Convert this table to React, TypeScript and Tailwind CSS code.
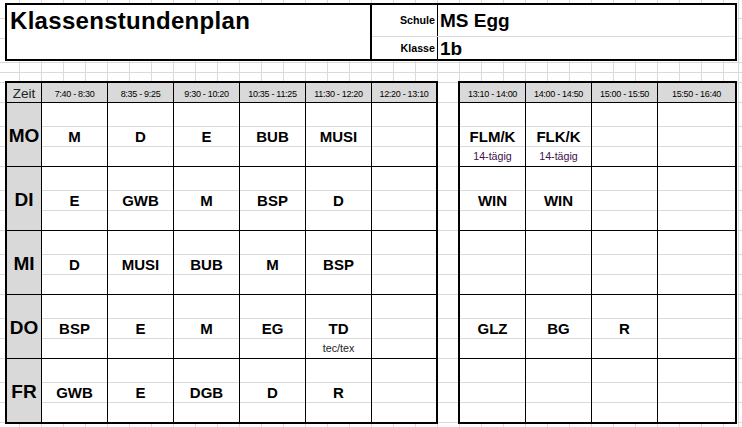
import { Fragment } from "react";

const FONT = "font-['Liberation_Sans',Arial,sans-serif]";

type Slot = { s?: string; n?: string; purple?: boolean };

const days = ["MO", "DI", "MI", "DO", "FR"];

const times1 = ["7:40 - 8:30", "8:35 - 9:25", "9:30 - 10:20", "10:35 - 11:25", "11:30 - 12:20", "12:20 - 13:10"];
const times2 = ["13:10 - 14:00", "14:00 - 14:50", "15:00 - 15:50", "15:50 - 16:40"];

const plan1: Slot[][] = [
  [{ s: "M" }, { s: "D" }, { s: "E" }, { s: "BUB" }, { s: "MUSI" }, {}],
  [{ s: "E" }, { s: "GWB" }, { s: "M" }, { s: "BSP" }, { s: "D" }, {}],
  [{ s: "D" }, { s: "MUSI" }, { s: "BUB" }, { s: "M" }, { s: "BSP" }, {}],
  [{ s: "BSP" }, { s: "E" }, { s: "M" }, { s: "EG" }, { s: "TD", n: "tec/tex" }, {}],
  [{ s: "GWB" }, { s: "E" }, { s: "DGB" }, { s: "D" }, { s: "R" }, {}],
];

const plan2: Slot[][] = [
  [{ s: "FLM/K", n: "14-tägig", purple: true }, { s: "FLK/K", n: "14-tägig", purple: true }, {}, {}],
  [{ s: "WIN" }, { s: "WIN" }, {}, {}],
  [{}, {}, {}, {}],
  [{ s: "GLZ" }, { s: "BG" }, { s: "R" }, {}],
  [{}, {}, {}, {}],
];

function Head({ label }: { label: string }) {
  return (
    <div className="flex items-end justify-center bg-[#d9d9d9] pb-[3px] text-[9px] leading-none tracking-[-0.3px] whitespace-nowrap">
      {label}
    </div>
  );
}

function Cell({ slot }: { slot: Slot }) {
  return (
    <div className="flex flex-col bg-white">
      <div className="h-[23px]" />
      <div className="flex h-[20px] items-center justify-center border-t border-[#dadada] text-[15px] font-bold leading-none">
        {slot.s}
      </div>
      <div
        className={`flex h-[20px] items-center justify-center border-t border-[#dadada] text-[10.7px] leading-none ${
          slot.purple ? "text-[#40124a]" : "text-[#222]"
        }`}
      >
        {slot.n}
      </div>
    </div>
  );
}

export default function App() {
  return (
    <div
      className={`h-[427px] w-[742px] overflow-hidden bg-white pl-[5px] pt-[3px] text-black ${FONT} bg-[image:repeating-linear-gradient(90deg,transparent_0_19px,#dadada_19px_20px,transparent_20px_22px),repeating-linear-gradient(180deg,transparent_0_18px,#dadada_18px_19px,transparent_19px_38px,#dadada_38px_39px,transparent_39px_62px,#dadada_62px_63px,transparent_63px_64px),linear-gradient(180deg,transparent_72px,#dadada_72px_73px,transparent_73px),linear-gradient(90deg,transparent_738px,#dadada_738px_739px,transparent_739px)]`}
    >
      {/* Kopf */}
      <div className="flex h-[58px] w-[732px] border-2 border-black bg-white">
        <div className="w-[363px] pl-[3px] pt-[4px] text-[24px] font-bold leading-none tracking-[0.3px]">
          Klassenstundenplan
        </div>
        <div className="flex flex-1 flex-col border-l-2 border-black">
          <div className="flex h-[31px]">
            <div className="flex w-[65px] items-center justify-end pr-[2px] text-[10.7px] font-bold leading-none">
              Schule
            </div>
            <div className="flex flex-1 items-center border-l border-black pl-[2px] text-[19px] font-bold leading-none">
              MS Egg
            </div>
          </div>
          <div className="flex h-[23px] border-t border-[#dadada]">
            <div className="flex w-[65px] items-center justify-end pr-[2px] text-[10.7px] font-bold leading-none">
              Klasse
            </div>
            <div className="flex flex-1 items-center border-l border-black pl-[2px] text-[19px] font-bold leading-none">
              1b
            </div>
          </div>
        </div>
      </div>

      {/* Stundenplan */}
      <div className="mt-[20px] flex gap-[20px]">
        <div className="grid grid-cols-[34px_65px_65px_65px_65px_65px_64px] grid-rows-[19px_63px_63px_63px_63px_63px] gap-px border-2 border-black bg-black">
          <div className="flex items-end justify-center bg-[#d9d9d9] pb-[2px] text-[13.5px] leading-none text-[#222]">
            Zeit
          </div>
          {times1.map((t) => (
            <Head key={t} label={t} />
          ))}
          {days.map((d, i) => (
            <Fragment key={d}>
              <div className="flex items-center justify-center bg-[#d9d9d9] pt-[1px] text-[19px] font-bold leading-none">
                {d}
              </div>
              {plan1[i].map((slot, j) => (
                <Cell key={j} slot={slot} />
              ))}
            </Fragment>
          ))}
        </div>

        <div className="grid grid-cols-[65px_65px_65px_77px] grid-rows-[19px_63px_63px_63px_63px_63px] gap-px border-2 border-black bg-black">
          {times2.map((t) => (
            <Head key={t} label={t} />
          ))}
          {plan2.map((row, i) =>
            row.map((slot, j) => <Cell key={`${i}-${j}`} slot={slot} />)
          )}
        </div>
      </div>
    </div>
  );
}
